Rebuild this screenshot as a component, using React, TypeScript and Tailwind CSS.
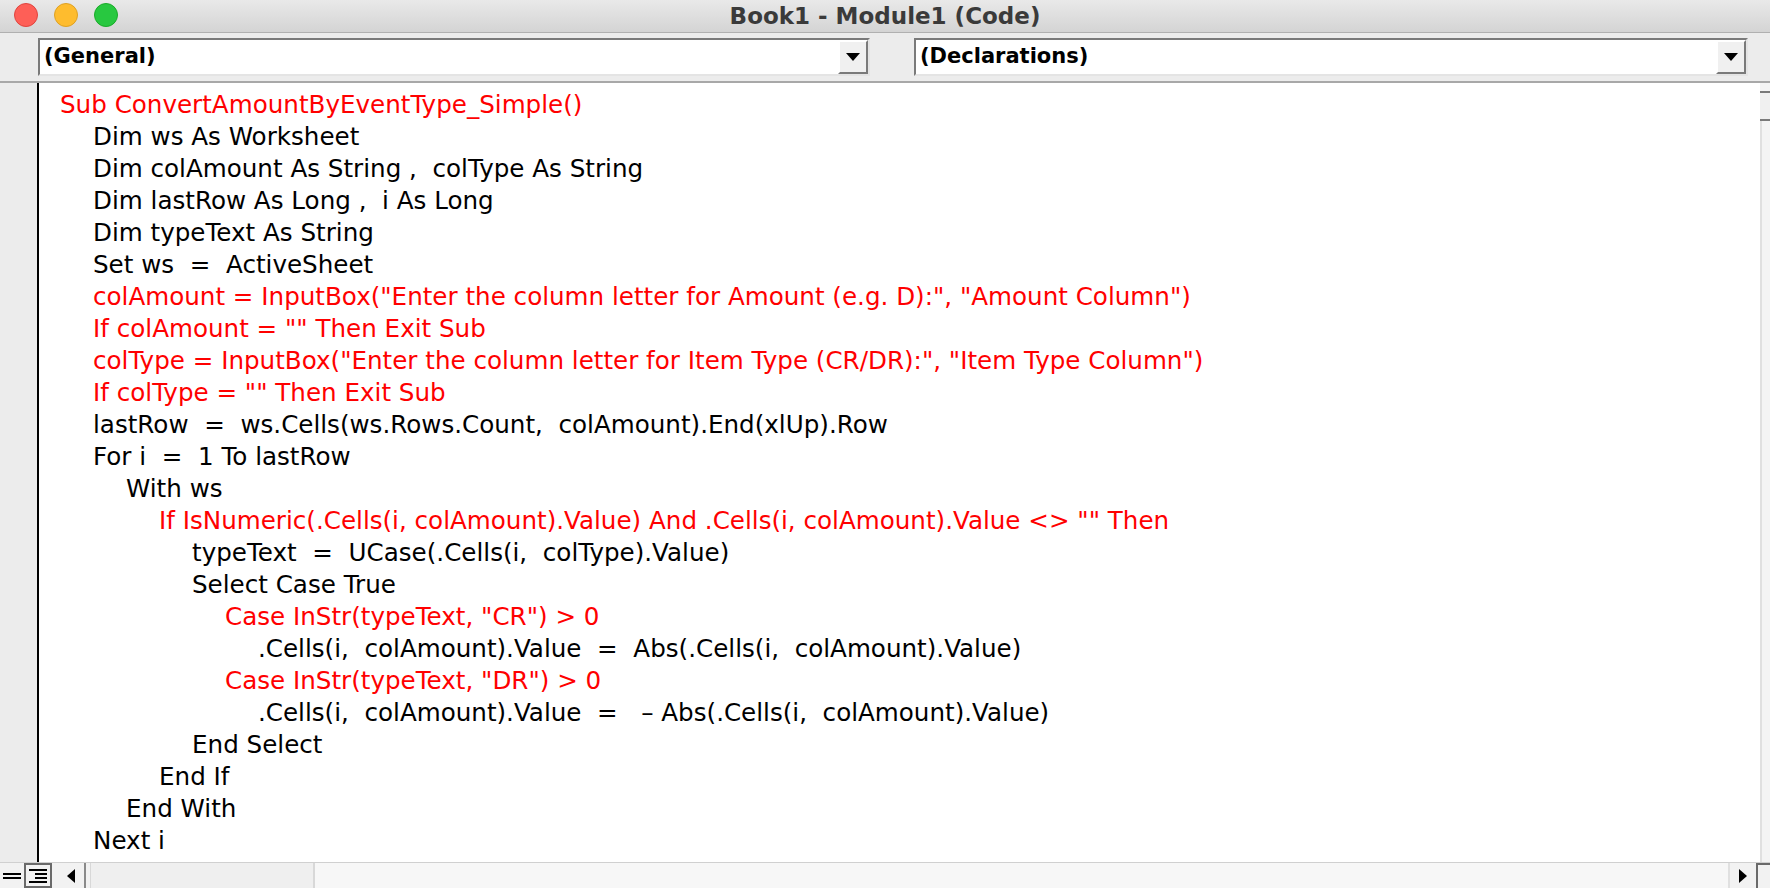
const lines: [number, boolean, string][] = [
  [0, true, "Sub ConvertAmountByEventType_Simple()"],
  [1, false, "Dim ws As Worksheet"],
  [1, false, "Dim colAmount As String ,  colType As String"],
  [1, false, "Dim lastRow As Long ,  i As Long"],
  [1, false, "Dim typeText As String"],
  [1, false, "Set ws  =  ActiveSheet"],
  [1, true, 'colAmount = InputBox("Enter the column letter for Amount (e.g. D):", "Amount Column")'],
  [1, true, 'If colAmount = "" Then Exit Sub'],
  [1, true, 'colType = InputBox("Enter the column letter for Item Type (CR/DR):", "Item Type Column")'],
  [1, true, 'If colType = "" Then Exit Sub'],
  [1, false, "lastRow  =  ws.Cells(ws.Rows.Count,  colAmount).End(xlUp).Row"],
  [1, false, "For i  =  1 To lastRow"],
  [2, false, "With ws"],
  [3, true, 'If IsNumeric(.Cells(i, colAmount).Value) And .Cells(i, colAmount).Value <> "" Then'],
  [4, false, "typeText  =  UCase(.Cells(i,  colType).Value)"],
  [4, false, "Select Case True"],
  [5, true, 'Case InStr(typeText, "CR") > 0'],
  [6, false, ".Cells(i,  colAmount).Value  =  Abs(.Cells(i,  colAmount).Value)"],
  [5, true, 'Case InStr(typeText, "DR") > 0'],
  [6, false, ".Cells(i,  colAmount).Value  =   – Abs(.Cells(i,  colAmount).Value)"],
  [4, false, "End Select"],
  [3, false, "End If"],
  [2, false, "End With"],
  [1, false, "Next i"],
];

const indent = ["pl-0", "pl-[33px]", "pl-[66px]", "pl-[99px]", "pl-[132px]", "pl-[165px]", "pl-[198px]"];

function Dropdown({ label, className }: { label: string; className: string }) {
  return (
    <div className={`flex h-[38px] items-stretch border-2 border-t-[#7a7a7a] border-l-[#7a7a7a] border-b-[#e4e4e4] border-r-[#e4e4e4] bg-white ${className}`}>
      <div className="flex-1 pl-1 flex items-center text-[21px] font-bold text-black">{label}</div>
      <div className="w-[30px] flex items-center justify-center bg-[#f0f0f0] border-2 border-t-white border-l-white border-b-[#7a7a7a] border-r-[#7a7a7a]">
        <svg width="14" height="8" viewBox="0 0 14 8"><path d="M0 0h14L7 8z" fill="#000" /></svg>
      </div>
    </div>
  );
}

export default function App() {
  return (
    <div className="w-[1770px] h-[888px] flex flex-col overflow-hidden bg-white" style={{ fontFamily: '"DejaVu Sans", Verdana, sans-serif' }}>
      <div className="h-[33px] relative flex items-center justify-center bg-gradient-to-b from-[#e9e9e9] to-[#d4d4d4] border-b border-[#b0b0b0]">
        <div className="absolute left-[14px] top-[3px] flex gap-[16px]">
          <span className="w-[24px] h-[24px] rounded-full bg-[#fe5f57] border border-[#e0443e]" />
          <span className="w-[24px] h-[24px] rounded-full bg-[#febc2e] border border-[#dea123]" />
          <span className="w-[24px] h-[24px] rounded-full bg-[#28c840] border border-[#1aab29]" />
        </div>
        <span className="text-[23px] font-bold text-[#3a3a3a]">Book1 - Module1 (Code)</span>
      </div>
      <div className="h-[50px] flex items-center bg-[#ececec] border-b-2 border-[#a8a8a8] pl-[38px] pr-[22px]">
        <Dropdown label="(General)" className="w-[832px]" />
        <Dropdown label="(Declarations)" className="w-[834px] ml-[44px]" />
      </div>
      <div className="flex-1 flex min-h-0">
        <div className="w-[39px] bg-[#ececec] border-r-2 border-black" />
        <div className="flex-1 pl-[21px] pt-[6px] text-[24.6px] leading-[32px] whitespace-pre">
          {lines.map(([lvl, red, t], i) => (
            <div key={i} className={`${indent[lvl]} ${red ? "text-[#ff0000]" : "text-black"}`}>{t}</div>
          ))}
        </div>
        <div className="w-[10px] flex flex-col bg-[#f4f4f4]">
          <div className="h-[30px] border-y-2 border-[#7a7a7a] bg-[#f0f0f0] mt-[8px]" />
          <div className="flex-1 border-l-2 border-[#e0e0e0] bg-[#f4f4f4]" />
        </div>
      </div>
      <div className="h-[26px] flex items-stretch bg-[#f2f2f2] border-t border-[#d0d0d0]">
        <div className="w-[24px] flex flex-col justify-center gap-[2px] px-[3px]">
          <span className="h-[2px] bg-black" /><span className="h-[2px] bg-black" />
        </div>
        <div className="w-[28px] border-2 border-[#6a6a6a] flex flex-col justify-center gap-[2px] px-[3px]">
          <span className="h-[2px] bg-black" /><span className="h-[2px] bg-black ml-[6px]" /><span className="h-[2px] bg-black ml-[6px]" /><span className="h-[2px] bg-black" />
        </div>
        <div className="w-[28px] ml-[6px] flex items-center justify-center border-r-2 border-[#8a8a8a]">
          <svg width="8" height="14" viewBox="0 0 8 14"><path d="M8 0v14L0 7z" fill="#000" /></svg>
        </div>
        <div className="w-[225px] ml-[4px] bg-[#efefef] border-r-2 border-[#8a8a8a] border-l border-[#d8d8d8]" />
        <div className="flex-1 bg-[#f7f7f7]" />
        <div className="w-[28px] flex items-center justify-center border-l-2 border-[#e0e0e0]">
          <svg width="8" height="14" viewBox="0 0 8 14"><path d="M0 0v14L8 7z" fill="#000" /></svg>
        </div>
        <div className="w-[14px] border-l-2 border-t-2 border-[#6a6a6a]" />
      </div>
    </div>
  );
}
